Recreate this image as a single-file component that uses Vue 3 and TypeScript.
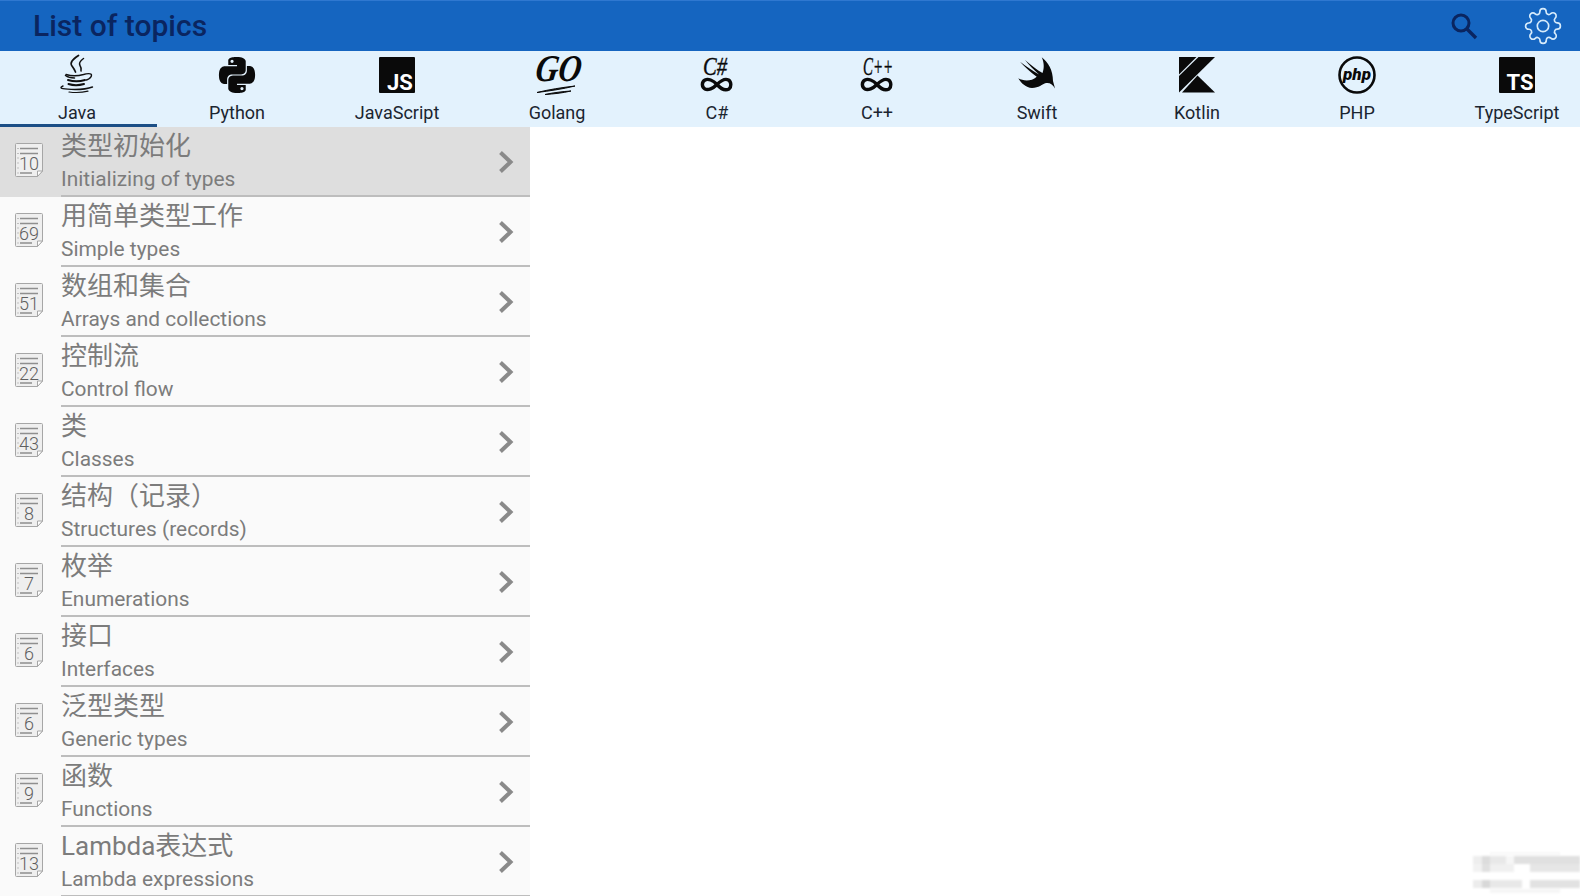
<script setup lang="ts">
interface Tab { label: string; icon: string }
interface Topic { zh: string; en: string; n: number }

const tabs: Tab[] = [
  { label: 'Java', icon: 'java' },
  { label: 'Python', icon: 'python' },
  { label: 'JavaScript', icon: 'js' },
  { label: 'Golang', icon: 'go' },
  { label: 'C#', icon: 'csharp' },
  { label: 'C++', icon: 'cpp' },
  { label: 'Swift', icon: 'swift' },
  { label: 'Kotlin', icon: 'kotlin' },
  { label: 'PHP', icon: 'php' },
  { label: 'TypeScript', icon: 'ts' },
]

const topics: Topic[] = [
  { zh: '类型初始化', en: 'Initializing of types', n: 10 },
  { zh: '用简单类型工作', en: 'Simple types', n: 69 },
  { zh: '数组和集合', en: 'Arrays and collections', n: 51 },
  { zh: '控制流', en: 'Control flow', n: 22 },
  { zh: '类', en: 'Classes', n: 43 },
  { zh: '结构（记录）', en: 'Structures (records)', n: 8 },
  { zh: '枚举', en: 'Enumerations', n: 7 },
  { zh: '接口', en: 'Interfaces', n: 6 },
  { zh: '泛型类型', en: 'Generic types', n: 6 },
  { zh: '函数', en: 'Functions', n: 9 },
  { zh: 'Lambda表达式', en: 'Lambda expressions', n: 13 },
]

const blur: [number, number, number, number, string][] = [
  [0, 4, 9, 8, '#eeeeee'], [9, 4, 8, 8, '#dcdcdc'], [17, 4, 16, 8, '#e8e8e8'], [33, 4, 8, 8, '#f6f6f6'], [41, 4, 66, 8, '#e0e0e0'],
  [0, 12, 9, 8, '#f2f2f2'], [9, 12, 8, 8, '#e0e0e0'], [17, 12, 24, 8, '#f0f0f0'], [57, 12, 50, 8, '#e6e6e6'],
  [0, 28, 9, 8, '#ececec'], [9, 28, 8, 8, '#d8d8d8'], [17, 28, 32, 8, '#e8e8e8'], [57, 28, 50, 8, '#e2e2e2'],
  [17, 37, 70, 4, '#f6f6f6'], [17, 0, 70, 3, '#f8f8f8'],
]
</script>

<template>
  <div class="page">
    <header class="appbar">
      <h1 class="title">List of topics</h1>
      <svg class="search" viewBox="0 0 28 28" width="28" height="28" aria-hidden="true">
        <circle cx="11" cy="11" r="8" fill="none" stroke="#0a2560" stroke-width="3" />
        <path d="M17 17l9 9" stroke="#0a2560" stroke-width="3.4" fill="none" />
      </svg>
      <svg class="gear" viewBox="0 0 24 24" width="38" height="38" fill="none" stroke="#d6ebfb" stroke-width="1.05" aria-hidden="true">
        <path d="M12 15.6a3.6 3.6 0 100-7.2 3.6 3.6 0 000 7.2z" />
        <path d="M19.4 15a1.65 1.65 0 00.33 1.82l.06.06a2 2 0 010 2.83 2 2 0 01-2.83 0l-.06-.06a1.65 1.65 0 00-1.82-.33 1.65 1.65 0 00-1 1.51V21a2 2 0 01-2 2 2 2 0 01-2-2v-.09A1.65 1.65 0 009 19.4a1.65 1.65 0 00-1.82.33l-.06.06a2 2 0 01-2.83 0 2 2 0 010-2.83l.06-.06a1.65 1.65 0 00.33-1.82 1.65 1.65 0 00-1.51-1H3a2 2 0 01-2-2 2 2 0 012-2h.09A1.65 1.65 0 004.6 9a1.65 1.65 0 00-.33-1.82l-.06-.06a2 2 0 010-2.83 2 2 0 012.83 0l.06.06a1.65 1.65 0 001.82.33H9a1.65 1.65 0 001-1.51V3a2 2 0 012-2 2 2 0 012 2v.09a1.65 1.65 0 001 1.51 1.65 1.65 0 001.82-.33l.06-.06a2 2 0 012.83 0 2 2 0 010 2.83l-.06.06a1.65 1.65 0 00-.33 1.82V9a1.65 1.65 0 001.51 1H21a2 2 0 012 2 2 2 0 01-2 2h-.09a1.65 1.65 0 00-1.51 1z" />
      </svg>
    </header>

    <nav class="tabs">
      <div v-for="(t, i) in tabs" :key="t.label" class="tab" :class="{ active: i === 0 }">
        <svg class="logo" viewBox="0 0 40 40" width="40" height="40" aria-hidden="true">
          <g v-if="t.icon === 'java'" fill="none" stroke="#111" stroke-linecap="round">
            <path d="M21.500 .5c-6 4-9 7-6.500 10.500 1.500 2 2.500 3.500 3.500 6" stroke-width="1.700" />
            <path d="M26.500 3.500c-3.500 2.500-5 4.500-3.500 7 1 1.500 1.500 3 1 5.500" stroke-width="1.500" />
            <path d="M9 19.500c5 1.500 12 1.500 17.500 0 3-1 8-1.500 8 .5 0 2-2.500 4-5 5" stroke-width="1.400" />
            <path d="M8.500 20.500c2 1.500 5 2.500 9 2.500" stroke-width="1.500" />
            <path d="M11 25c5 1.500 12 1.500 17 0M11.500 29c4 1.300 11 1.300 15.500 0" stroke-width="2" />
            <path d="M6 31c-6 2.500 2 3.500 12 3.500 7 0 13-.8 17.500-2.500" stroke-width="1.400" />
            <path d="M12 37c6 .8 13 .6 19-.8" stroke-width="1.200" />
          </g>
          <g v-else-if="t.icon === 'python'" transform="translate(2 2) scale(1.5)">
            <path fill="#0a0a0a" d="M14.25.18l.9.2.73.26.59.3.45.32.34.34.25.34.16.33.1.3.04.26.02.2-.01.13V8.500l-.05.63-.13.55-.21.46-.26.38-.3.31-.33.25-.35.19-.35.14-.33.1-.3.07-.26.04-.21.02H8.770l-.69.05-.59.14-.5.22-.41.27-.33.32-.27.35-.2.36-.15.37-.1.35-.07.32-.04.27-.02.21v3.060H3.170l-.21-.03-.28-.07-.32-.12-.35-.18-.36-.26-.36-.36-.35-.46-.32-.59-.28-.73-.21-.88-.14-1.050-.05-1.230.06-1.220.16-1.040.24-.87.32-.71.36-.57.4-.44.42-.33.42-.24.4-.16.36-.1.32-.05.24-.01h.16l.06.01h8.160v-.83H6.180l-.01-2.750-.02-.37.05-.34.11-.31.17-.28.25-.26.31-.23.38-.2.44-.18.51-.15.58-.12.64-.1.71-.06.77-.04.84-.02 1.270.05zm-6.300 1.980l-.23.33-.08.41.08.41.23.34.33.22.41.09.41-.09.33-.22.23-.34.08-.41-.08-.41-.23-.33-.33-.22-.41-.09-.41.09zm13.090 3.950l.28.06.32.12.35.18.36.27.36.35.35.47.32.59.28.73.21.88.14 1.040.05 1.230-.06 1.230-.16 1.040-.24.86-.32.71-.36.57-.4.45-.42.33-.42.24-.4.16-.36.09-.32.05-.24.02-.16-.01h-8.220v.82h5.840l.01 2.760.02.36-.05.34-.11.31-.17.29-.25.25-.31.24-.38.2-.44.17-.51.15-.58.13-.64.09-.71.07-.77.04-.84.01-1.270-.04-1.070-.14-.9-.2-.73-.25-.59-.3-.45-.33-.34-.34-.25-.34-.16-.33-.1-.3-.04-.25-.02-.2.01-.13v-5.340l.05-.64.13-.54.21-.46.26-.38.3-.32.33-.24.35-.2.35-.14.33-.1.3-.06.26-.04.21-.02.13-.01h5.840l.69-.05.59-.14.5-.21.41-.28.33-.32.27-.35.2-.36.15-.36.1-.35.07-.32.04-.28.02-.21V6.070h2.090l.14.01zm-6.470 14.250l-.23.33-.08.41.08.41.23.33.33.23.41.08.41-.08.33-.23.23-.33.08-.41-.08-.41-.23-.33-.33-.23-.41-.08-.41.08z" />
          </g>
          <g v-else-if="t.icon === 'js'">
            <rect x="2" y="2" width="36" height="36" rx="1" fill="#0a0a0a" />
            <text x="23" y="35" text-anchor="middle" class="badge">JS</text>
          </g>
          <g v-else-if="t.icon === 'go'">
            <text transform="translate(20 26) scale(.88 1.050) skewX(-10)" text-anchor="middle" class="go">GO</text>
            <path d="M0 37.500c12-3 25-5 38-6.500-12 3-26 5-38 6.500zM8 39.500c9-2 18-3 26-3.500-8 2-18 3-26 3.500z" stroke="#0a0a0a" stroke-width="1" fill="#0a0a0a" stroke-linejoin="round" />
          </g>
          <g v-else-if="t.icon === 'csharp' || t.icon === 'cpp'">
            <text transform="translate(6 20) scale(1 1.300)" :textLength="t.icon === 'csharp' ? 24 : 30" lengthAdjust="spacingAndGlyphs" class="csym">{{ t.icon === 'csharp' ? 'C#' : 'C++' }}</text>
            <path d="M20 29.500c-4-4.500-9-6-12-4.500-3.500 2-3.500 7 0 9 3 1.500 8-.5 12-4.500zm0 0c4 4.500 8 6.500 12 4.500 2.500-2 2.500-7-.5-9-3-1.500-7.500 .5-11.500 4.500z" fill="none" stroke="#0a0a0a" stroke-width="3.400" />
          </g>
          <path v-else-if="t.icon === 'swift'" fill="#0a0a0a" d="M24.700 2.300C31 7 36 15 36 26l2 7.500c-2-4-5-6-9-5.500-4 1-7 5-14 5-6 0-11-5-13.700-9.700C6 26 14 27 19.700 21.700 13 17 7 11 3 6.700c7 5.300 13 9.300 19 12.800C17 15 12 10 8 5c6 5 12 10 17.500 13 2-5 1.500-11-.8-15.700z" />
          <g v-else-if="t.icon === 'kotlin'" fill="#0a0a0a">
            <polygon points="2,2 19.500,2 2,19.500" />
            <polygon points="21.500,2 38,2 2,37.500 2,21" />
            <polygon points="20.500,20.500 38,37.500 5,37.500" />
          </g>
          <g v-else-if="t.icon === 'php'">
            <circle cx="20" cy="20" r="17.500" fill="none" stroke="#0a0a0a" stroke-width="2.600" />
            <text x="20" y="25" text-anchor="middle" class="php">php</text>
          </g>
          <g v-else-if="t.icon === 'ts'">
            <rect x="2" y="2" width="36" height="36" rx="1" fill="#0a0a0a" />
            <text x="23" y="35" text-anchor="middle" class="badge">TS</text>
          </g>
        </svg>
        <span class="tab-label">{{ t.label }}</span>
      </div>
    </nav>

    <ul class="list">
      <li v-for="(t, i) in topics" :key="t.en" class="row" :class="{ selected: i === 0 }">
        <svg class="doc" viewBox="0 0 30 34" width="30" height="34" aria-hidden="true">
          <path d="M2.500 .5h25a1 1 0 011 1V28l-5 5.500H2.500a1 1 0 01-1-1v-31a1 1 0 011-1z" fill="#efefef" stroke="#a6a6a6" />
          <path d="M23.500 33.500V28h5z" fill="#fff" stroke="#a6a6a6" />
          <path d="M6 5.500h18M6 10.500h18M6 30h12" stroke="#8f8f8f" stroke-width="1.300" />
          <path d="M3.500 5.500h1M3.500 10.500h1M3.500 15h1M3.500 20h1M3.500 25h1M3.500 30h1" stroke="#8f8f8f" stroke-width="1.200" />
          <text x="15" y="26.500" text-anchor="middle" class="doc-num">{{ t.n }}</text>
        </svg>
        <div class="body">
          <div class="text">
            <div class="zh">{{ t.zh }}</div>
            <div class="en">{{ t.en }}</div>
          </div>
          <svg class="chev" viewBox="0 0 16 24" width="16" height="24" aria-hidden="true">
            <path d="M2.500 2.500 12.500 12l-10 9.500" fill="none" stroke="#8a8a8a" stroke-width="4" />
          </svg>
        </div>
      </li>
    </ul>

    <svg class="smudge" viewBox="0 0 107 41" width="107" height="41" aria-hidden="true">
      <rect v-for="(b, i) in blur" :key="i" :x="b[0]" :y="b[1]" :width="b[2]" :height="b[3]" :fill="b[4]" />
    </svg>
  </div>
</template>

<style>
html, body { margin: 0; background: #fff; overflow: hidden; }
</style>

<style scoped>
.page {
  position: relative;
  width: 1580px;
  height: 896px;
  overflow: hidden;
  background: #fff;
  font-family: Roboto, "Noto Sans CJK SC", sans-serif;
}
.appbar {
  height: 51px;
  box-sizing: border-box;
  display: flex;
  align-items: center;
  background: #1565c0;
  border-top: 1px solid #2f78d0;
  padding: 0 18px 0 33px;
}
.title {
  flex: 1;
  margin: 0;
  font-size: 30px;
  line-height: 50px;
  font-weight: 500;
  color: #0a2560;
}
.search { margin-right: 46px; margin-top: -1px; }
.gear { display: block; }
.tabs {
  height: 76px;
  display: flex;
  margin-left: -3px;
  background: #e3f2fd;
}
.tab {
  flex: 0 0 160px;
  position: relative;
  display: flex;
  flex-direction: column;
  align-items: center;
  padding-top: 4px;
  box-sizing: border-box;
}
.tab.active::after {
  content: "";
  position: absolute;
  left: 0;
  right: 0;
  bottom: 0;
  height: 3px;
  background: #1c4f86;
}
.logo { display: block; overflow: visible; }
.tab-label {
  margin-top: 7px;
  font-size: 18px;
  line-height: 22px;
  color: #1b2530;
}
.badge {
  font-family: Roboto, sans-serif;
  font-size: 22px;
  font-weight: 700;
  fill: #fff;
}
.go {
  font-family: "Liberation Serif", serif;
  font-style: italic;
  font-weight: 700;
  font-size: 36px;
  fill: #0a0a0a;
}
.csym {
  font-family: "Liberation Serif", serif;
  font-size: 19px;
  font-style: italic;
  fill: #0a0a0a;
  stroke: #0a0a0a;
  stroke-width: .3px;
}
.php {
  font-family: Roboto, sans-serif;
  font-style: italic;
  font-weight: 900;
  font-size: 17px;
  fill: #0a0a0a;
}
.list {
  list-style: none;
  margin: 0;
  padding: 0;
  width: 530px;
}
.row {
  height: 70px;
  display: flex;
  align-items: stretch;
  background: #fafafa;
}
.row.selected { background: #dedede; }
.doc {
  flex: none;
  margin: 16px 17px 0 14px;
}
.doc-num {
  font-family: Roboto, sans-serif;
  font-size: 18px;
  font-weight: 300;
  fill: #5f5f5f;
}
.body {
  flex: 1;
  min-width: 0;
  display: flex;
  align-items: center;
  box-sizing: border-box;
  border-bottom: 2px solid #bdbdbd;
  padding: 2px 16px 0 0;
}
.text {
  flex: 1;
  min-width: 0;
  align-self: flex-start;
  margin-top: -1px;
}
.zh {
  font-size: 26px;
  line-height: 36px;
  color: #7c7c7c;
}
.en {
  margin-top: 1px;
  font-size: 20.900px;
  line-height: 29px;
  color: #7c7c7c;
}
.chev { flex: none; }
.smudge {
  position: absolute;
  right: 0;
  bottom: 3px;
  filter: blur(1px);
}
</style>
